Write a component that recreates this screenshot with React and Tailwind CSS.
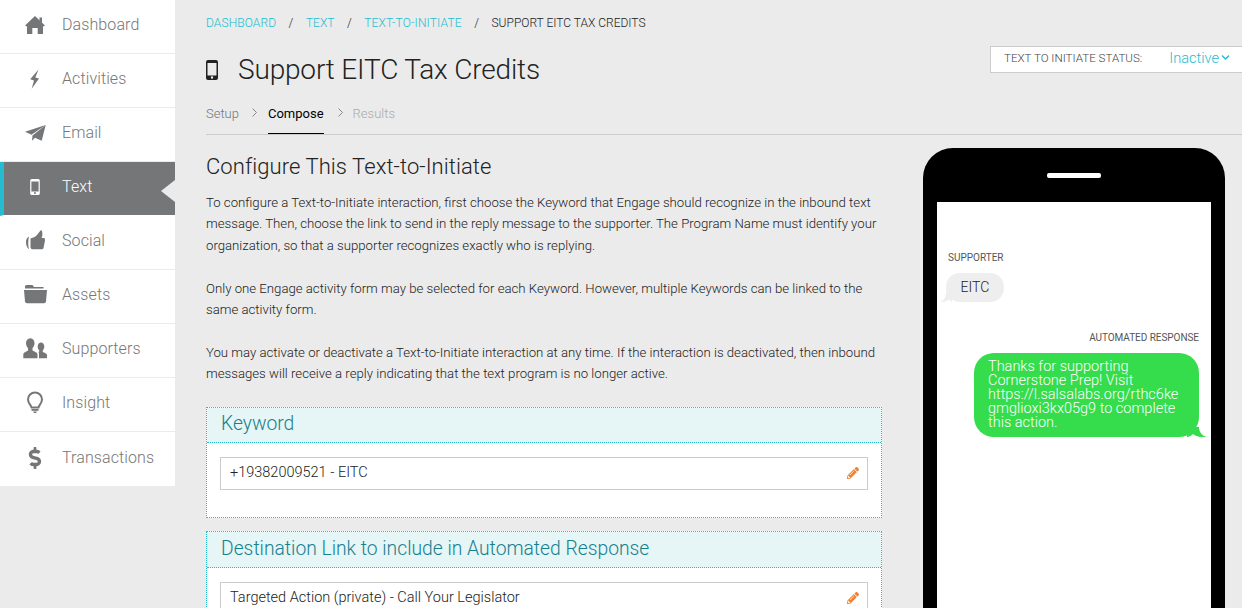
import { FaChevronDown, FaDollarSign, FaPencilAlt } from 'react-icons/fa'

// Sidebar icons are all drawn on the same 24px box
function NavIcon({ children }) {
  return (
    <svg className="w-6 h-6 shrink-0" viewBox="0 0 24 24" fill="currentColor">
      {children}
    </svg>
  )
}

function PhoneIcon({ className = '' }) {
  return (
    <svg className={className} viewBox="0 0 12 20" fill="currentColor">
      <path
        fillRule="evenodd"
        d="M2 0h8a2 2 0 0 1 2 2v16a2 2 0 0 1-2 2H2a2 2 0 0 1-2-2V2a2 2 0 0 1 2-2zM1.500 3v12.500h9V3h-9zM6 16.300a1.200 1.200 0 1 0 0 2.400 1.200 1.200 0 0 0 0-2.400z"
      />
    </svg>
  )
}

const navItems = [
  {
    label: 'Dashboard',
    icon: (
      <NavIcon>
        <path d="M12 3 22 12.500 20 13.500V21H14.700V15H9.300V21H4V13.500L2 12.500Z" />
        <path d="M16.500 4.500H19V10L16.500 7.700Z" />
      </NavIcon>
    ),
  },
  {
    label: 'Activities',
    icon: (
      <NavIcon>
        <path d="M15.500 2.500 7.200 12.300 11 13.500 8.700 21.800 16 11.500 12.300 10.500Z" />
      </NavIcon>
    ),
  },
  {
    label: 'Email',
    icon: (
      <NavIcon>
        <path d="M22.700 4 2 10.800 8.500 13.700Z" />
        <path d="M22.700 4 9.500 14.500 9 19.800 12 16.700 18.700 19.800Z" />
      </NavIcon>
    ),
  },
  {
    label: 'Text',
    active: true,
    icon: (
      <div className="w-6 flex justify-center">
        <PhoneIcon className="w-[10px] h-[16px]" />
      </div>
    ),
  },
  {
    label: 'Social',
    icon: (
      <NavIcon>
        <path d="M6 7.500C3.500 9 3 11 3 13 3 16 4 19 6 20.300 5 17 5 11 6 7.500Z" />
        <path d="M18 1C19.500 2 20 5 18.700 9H21C22 9 22 10.500 22 11.500L20.500 19C20.300 20 19.500 20.300 18.500 20.300H10C8.500 20.300 7.500 19.500 7.500 18V9.500C10.500 8.500 12 8 13.500 6.500 15.500 4.500 16.500 2.500 18 1Z" />
      </NavIcon>
    ),
  },
  {
    label: 'Assets',
    icon: (
      <NavIcon>
        <path d="M3.500 2H9.500L11 4H20.500V5.500H2V3.500Q2 2 3.500 2Z" />
        <path d="M1 7H24L23 18.500Q22.800 20.300 21 20.300H4Q2.200 20.300 2 18.500Z" />
      </NavIcon>
    ),
  },
  {
    label: 'Supporters',
    icon: (
      <NavIcon>
        <path d="M7.300 1.300C10 1.300 11.500 3.500 11.500 6 11.500 8.500 10.500 10 9.500 11V13.500C11.500 14.500 14.500 15.500 14.500 17.500V21.300H.3V17.500C.3 15.500 3.500 14.500 5 13.500V11C4 10 3 8.500 3 6 3 3.500 4.700 1.300 7.300 1.300Z" />
        <path d="M18 5.500C20 5.500 21.300 7.300 21.300 9.500 21.300 11.300 20.600 12.400 19.800 13.200V15C21.300 15.700 24 16.500 24 18V21.300H16V17.500C16 15.700 15 14.800 16.200 14.500V13.200C15.300 12.400 14.700 11.300 14.700 9.500 14.700 7.300 16 5.500 18 5.500Z" />
      </NavIcon>
    ),
  },
  {
    label: 'Insight',
    icon: (
      <NavIcon>
        <path
          d="M8.500 16.500C8 13.500 5 12.500 5 8.500A7 7 0 0 1 19 8.500C19 12.500 16 13.500 15.500 16.500Z"
          fill="none"
          stroke="currentColor"
          strokeWidth="2"
        />
        <path d="M8.500 18H15.500V19.800H8.500Z" />
        <path d="M10 20.500H14L13 22H11Z" />
      </NavIcon>
    ),
  },
  {
    label: 'Transactions',
    icon: (
      <div className="w-6 flex justify-center">
        <FaDollarSign className="w-[14px] h-[22px]" />
      </div>
    ),
  },
]

function SidebarRow({ item }) {
  if (item.active) {
    return (
      <div className="relative h-[54px] flex items-center pl-[19px] pb-[3px] bg-[#757677] border-l-4 border-l-[#25bcd0] border-b border-b-white text-white">
        {item.icon}
        <span className="ml-[15px] text-[16px] tracking-[0.1px]">{item.label}</span>
        <div className="absolute right-0 top-[18px] w-0 h-0 border-y-[11px] border-y-transparent border-r-[14px] border-r-[#ebebeb]" />
      </div>
    )
  }
  return (
    <div className="h-[54px] flex items-center pl-[23px] pb-[3px] bg-white border-b border-[#ebebeb] text-[#757677] last:border-b-0">
      {item.icon}
      <span className="ml-[15px] text-[16px] tracking-[0.1px]">{item.label}</span>
    </div>
  )
}

function Panel({ title, value, headerClass }) {
  return (
    <section className="border border-dotted border-[#25bcd0] bg-white">
      <h3 className={`${headerClass} px-[14px] flex items-center bg-[#e6f5f6] border-b border-dotted border-[#25bcd0] text-[19.3px] text-[#16808f]`}>
        {title}
      </h3>
      <div className="px-[13px] pt-[14px] pb-[27px]">
        <div className="h-[33px] flex items-center justify-between pl-[9px] pr-[8px] border border-[#cccccc] text-[14.5px] text-[#222222]">
          <span>{value}</span>
          <FaPencilAlt className="w-[12px] h-[12px] text-[#f0812d]" />
        </div>
      </div>
    </section>
  )
}

function TabChevron({ className = '' }) {
  return (
    <svg className={`w-[5px] h-[9px] mt-[7px] shrink-0 ${className}`} viewBox="0 0 5 9" fill="none" stroke="#888888">
      <path d="M.5.5 4.500 4.500.5 8.500" />
    </svg>
  )
}

export default function App() {
  return (
    <div className="w-[1242px] h-[608px] overflow-hidden flex bg-[#ebebeb] font-['Roboto',sans-serif] font-light">
      <aside className="w-[175px] shrink-0 self-start">
        {navItems.map((item) => (
          <SidebarRow key={item.label} item={item} />
        ))}
      </aside>

      <main className="flex-1 pl-[31px] min-w-0">
        <header className="relative h-[135px] border-b border-[#cccccc]">
          <nav className="pt-[13px] h-[32px] flex items-center gap-[12.5px] text-[12px] leading-[14px] text-[#222222]">
            <span className="text-[#25bcd0] tracking-[0.1px]">DASHBOARD</span>
            <span>/</span>
            <span className="text-[#25bcd0]">TEXT</span>
            <span>/</span>
            <span className="text-[#25bcd0] tracking-[0.15px]">TEXT-TO-INITIATE</span>
            <span>/</span>
            <span>SUPPORT EITC TAX CREDITS</span>
          </nav>
          <div className="mt-[19px] flex items-center">
            <PhoneIcon className="w-[12px] h-[20px] text-[#222222]" />
            <h1 className="ml-[20px] pt-[1px] text-[28px] tracking-[-0.17px] leading-[36px] text-[#222222]">Support EITC Tax Credits</h1>
          </div>
          <div className="mt-[13px] h-[33px] flex items-start text-[13px] text-[#757677]">
            <span className="pt-[3px]">Setup</span>
            <TabChevron className="ml-[13px]" />
            <span className="ml-[11px] h-[33px] pt-[3px] border-b border-black font-normal text-black">Compose</span>
            <TabChevron className="ml-[14px]" />
            <span className="ml-[10px] pt-[3px] text-[#aaaaaa]">Results</span>
          </div>
          <div className="absolute right-0 top-[46px] w-[252px] h-[27px] flex items-center pl-[13px] pb-[2px] bg-white border border-[#cccccc] border-r-0">
            <span className="text-[11.6px] text-[#444444]">TEXT TO INITIATE STATUS:</span>
            <span className="ml-[27px] text-[14.6px] text-[#25bcd0]">Inactive</span>
            <FaChevronDown className="ml-[2px] mt-[-3px] w-[9px] h-[9px] text-[#25bcd0]" />
          </div>
        </header>

        <div className="flex">
          <div className="w-[676px] shrink-0">
            <h2 className="mt-[18px] text-[22px] tracking-[0.07px] leading-[28px] text-[#222222]">Configure This Text-to-Initiate</h2>
            <div className="mt-[11px] text-[13.2px] leading-[21.4px] text-[#222222]">
              <p>
                To configure a Text-to-Initiate interaction, first choose the Keyword that Engage should recognize in the inbound text
                message. Then, choose the link to send in the reply message to the supporter. The Program Name must identify your
                organization, so that a supporter recognizes exactly who is replying.
              </p>
              <p className="mt-[21.4px]">
                Only one Engage activity form may be selected for each Keyword. However, multiple Keywords can be linked to the same
                activity form.
              </p>
              <p className="mt-[21.4px]">
                You may activate or deactivate a Text-to-Initiate interaction at any time. If the interaction is deactivated, then
                inbound messages will receive a reply indicating that the text program is no longer active.
              </p>
            </div>
            <div className="mt-[22px] flex flex-col gap-[13px]">
              <Panel title="Keyword" value="+19382009521 - EITC" headerClass="h-[35px]" />
              <Panel
                title="Destination Link to include in Automated Response"
                value="Targeted Action (private) - Call Your Legislator"
                headerClass="h-[36px]"
              />
            </div>
          </div>

          <div className="ml-[41px] mt-[13px] w-[302px] h-[480px] shrink-0 rounded-t-[30px] bg-black px-[14px] pt-[54px]">
            <div className="relative h-full bg-white text-[#222222]">
              <div className="absolute top-[-29px] left-[110px] w-[54px] h-[5px] rounded-[2px] bg-white" />
              <div className="pt-[50px] pl-[11px] text-[10px] leading-[12px] text-[#555555] font-normal">SUPPORTER</div>
              <div className="relative ml-[9px] mt-[9px] w-[58px] h-[29px] flex items-center justify-center rounded-[14px] bg-[#eeeeee] text-[14px]">
                EITC
                <svg className="absolute left-[-6px] bottom-0 w-[12px] h-[10px]" viewBox="0 0 12 10" fill="#eeeeee">
                  <path d="M6 0C6 5 4 8.500 0 10 4 10 7 9.500 9 7.500 10 8.500 11 9.500 12 10V0Z" />
                </svg>
              </div>
              <div className="mt-[30px] pr-[12px] text-right text-[10px] tracking-[-0.05px] leading-[12px] text-[#555555] font-normal">AUTOMATED RESPONSE</div>
              <div className="relative ml-[37px] mt-[9px] w-[225px] h-[84px] px-[14px] pt-[7px] rounded-[20px] bg-[#35dc4b] text-[14.5px] leading-[14px] text-white">
                <p>Thanks for supporting</p>
                <p>Cornerstone Prep! Visit</p>
                <p>https://l.salsalabs.org/rthc6ke</p>
                <p>gmglioxi3kx05g9 to complete</p>
                <p>this action.</p>
                <svg className="absolute right-[-8px] bottom-0 w-[20px] h-[10px]" viewBox="0 0 20 10" fill="#35dc4b">
                  <path d="M12 0C12 5 15 9 20 10 16 10.500 9.500 10 6 7 4 9 2 10 0 10V0Z" />
                </svg>
              </div>
            </div>
          </div>
        </div>
      </main>
    </div>
  )
}
